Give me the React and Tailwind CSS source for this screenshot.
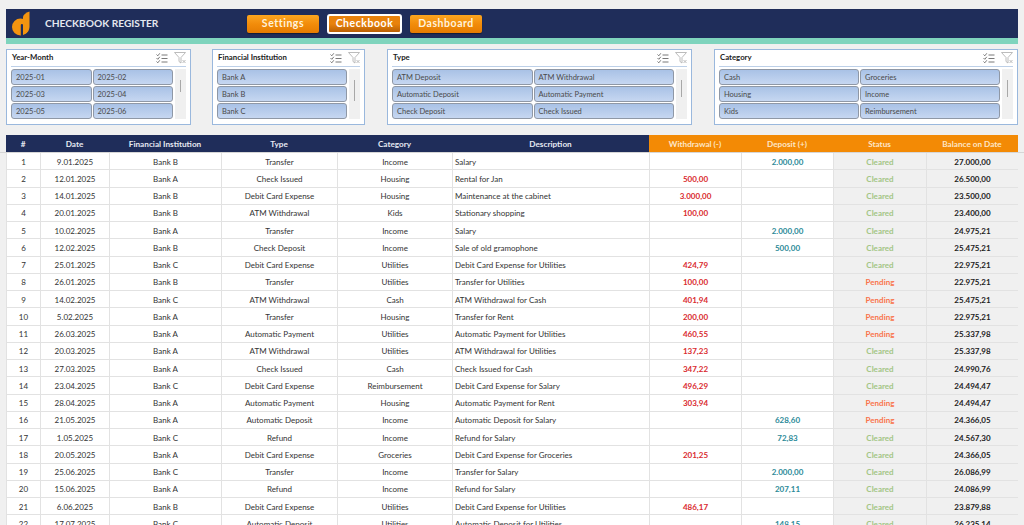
const rows = [
  ["1", "9.01.2025", "Bank B", "Transfer", "Income", "Salary", "", "2.000,00", "Cleared", "27.000,00"],
  ["2", "12.01.2025", "Bank A", "Check Issued", "Housing", "Rental for Jan", "500,00", "", "Cleared", "26.500,00"],
  ["3", "14.01.2025", "Bank B", "Debit Card Expense", "Housing", "Maintenance at the cabinet", "3.000,00", "", "Cleared", "23.500,00"],
  ["4", "20.01.2025", "Bank B", "ATM Withdrawal", "Kids", "Stationary shopping", "100,00", "", "Cleared", "23.400,00"],
  ["5", "10.02.2025", "Bank A", "Transfer", "Income", "Salary", "", "2.000,00", "Cleared", "24.975,21"],
  ["6", "12.02.2025", "Bank B", "Check Deposit", "Income", "Sale of old gramophone", "", "500,00", "Cleared", "25.475,21"],
  ["7", "25.01.2025", "Bank C", "Debit Card Expense", "Utilities", "Debit Card Expense for Utilities", "424,79", "", "Cleared", "22.975,21"],
  ["8", "26.01.2025", "Bank B", "Transfer", "Utilities", "Transfer for Utilities", "100,00", "", "Pending", "22.975,21"],
  ["9", "14.02.2025", "Bank C", "ATM Withdrawal", "Cash", "ATM Withdrawal for Cash", "401,94", "", "Pending", "25.475,21"],
  ["10", "5.02.2025", "Bank A", "Transfer", "Housing", "Transfer for Rent", "200,00", "", "Pending", "22.975,21"],
  ["11", "26.03.2025", "Bank A", "Automatic Payment", "Utilities", "Automatic Payment for Utilities", "460,55", "", "Pending", "25.337,98"],
  ["12", "20.03.2025", "Bank A", "ATM Withdrawal", "Utilities", "ATM Withdrawal for Utilities", "137,23", "", "Cleared", "25.337,98"],
  ["13", "27.03.2025", "Bank A", "Check Issued", "Cash", "Check Issued for Cash", "347,22", "", "Cleared", "24.990,76"],
  ["14", "23.04.2025", "Bank C", "Debit Card Expense", "Reimbursement", "Debit Card Expense for Salary", "496,29", "", "Cleared", "24.494,47"],
  ["15", "28.04.2025", "Bank A", "Automatic Payment", "Housing", "Automatic Payment for Rent", "303,94", "", "Pending", "24.494,47"],
  ["16", "21.05.2025", "Bank A", "Automatic Deposit", "Income", "Automatic Deposit for Salary", "", "628,60", "Pending", "24.366,05"],
  ["17", "1.05.2025", "Bank C", "Refund", "Income", "Refund for Salary", "", "72,83", "Cleared", "24.567,30"],
  ["18", "20.05.2025", "Bank A", "Debit Card Expense", "Groceries", "Debit Card Expense for Groceries", "201,25", "", "Cleared", "24.366,05"],
  ["19", "25.06.2025", "Bank C", "Transfer", "Income", "Transfer for Salary", "", "2.000,00", "Cleared", "26.086,99"],
  ["20", "15.06.2025", "Bank A", "Refund", "Income", "Refund for Salary", "", "207,11", "Cleared", "24.086,99"],
  ["21", "6.06.2025", "Bank B", "Debit Card Expense", "Utilities", "Debit Card Expense for Utilities", "486,17", "", "Cleared", "23.879,88"],
  ["22", "17.07.2025", "Bank C", "Automatic Deposit", "Utilities", "Automatic Deposit for Utilities", "", "148,15", "Cleared", "26.235,14"],
];

const columns = "grid grid-cols-[34px_69px_112px_116px_115px_197px_92px_92px_93px_92px]";

function Logo() {
  return (
    <svg width="20" height="25" viewBox="0 0 20 25" className="shrink-0">
      <circle cx="9.5" cy="16" r="8.5" fill="#f3940f" />
      <path d="M12 6 Q12.5 2.5 18.5 0.5 L18.5 16 A8.5 8.5 0 0 1 14 23 L12 23 Z" fill="#f3940f" />
      <rect x="9.8" y="13" width="2.2" height="12" rx="1" fill="#1f2d5a" />
    </svg>
  );
}

function SelectIcon() {
  return (
    <svg width="12" height="11" viewBox="0 0 12 11" fill="none" stroke="#6a6a6a" strokeWidth="0.9">
      <path d="M0.5 1.5 L1.8 2.8 L3.8 0.3" />
      <path d="M0.5 5 L1.8 6.3 L3.8 3.8" />
      <path d="M0.5 8.5 L1.8 9.8 L3.8 7.3" />
      <path d="M5.5 2 H11.5 M5.5 5.5 H11.5 M5.5 9 H11.5" />
    </svg>
  );
}

function ClearFilterIcon() {
  return (
    <svg width="12" height="12" viewBox="0 0 12 12" fill="none" stroke="#b4b4b4" strokeWidth="0.9">
      <path d="M0.5 0.5 H11.5 L7 5.5 V11 L5 9.5 V5.5 Z" />
      <path d="M8.5 8 L11.5 11 M11.5 8 L8.5 11" />
    </svg>
  );
}

function NavButton({ label, active }) {
  if (active) {
    return (
      <button className="w-[75px] h-[20px] rounded-[3px] border-2 border-white bg-gradient-to-b from-[#e8820c] via-[#e8820c] to-[#b85f05] text-[10.5px] font-bold tracking-[0.55px] text-white">
        {label}
      </button>
    );
  }
  return (
    <button className="w-[72px] h-[18px] rounded-[2px] bg-gradient-to-b from-[#fba61f] via-[#f28c0a] to-[#e57c02] text-[10.5px] font-bold tracking-[0.55px] text-[#fff3dc] shadow-[0_1px_1px_rgba(0,0,0,0.4)]">
      {label}
    </button>
  );
}

function Slicer({ title, width, items, cols, thumb }) {
  return (
    <div className={`${width} h-[76px] shrink-0 border border-[#9ab8dd] bg-white px-[4px]`}>
      <div className="flex h-[16px] items-center justify-between pl-[1px]">
        <span className="text-[7.8px] font-bold text-[#222]">{title}</span>
        <div className="flex items-center gap-[6px]">
          <SelectIcon />
          <ClearFilterIcon />
        </div>
      </div>
      <div className="h-[1px] bg-[#bdd0e8]" />
      <div className="mt-[2px] flex gap-[2px]">
        <div className={`grid flex-1 gap-x-[1px] gap-y-[1px] ${cols}`}>
          {items.map((item) => (
            <div
              key={item}
              className="flex h-[16px] items-center truncate rounded-[3px] border border-[#8f98a6] bg-gradient-to-b from-[#a9c2e6] to-[#c6d7f1] pl-[4px] pt-[1px] text-[7.5px] text-[#4a4a4a]"
            >
              {item}
            </div>
          ))}
        </div>
        <div className="flex h-[50px] w-[11px] shrink-0 justify-center bg-[#f0f0f0]">
          <div className={`mt-[11px] w-[1px] bg-[#a8a8a8] ${thumb}`} />
        </div>
      </div>
    </div>
  );
}

function HeaderCell({ label, orange }) {
  return (
    <div
      className={`flex items-center justify-center pt-[1px] text-[8.2px] font-bold ${
        orange ? "bg-[#f38a05] text-[#fde6c8]" : "bg-[#1f2d5a] text-[#e6e9f2]"
      }`}
    >
      {label}
    </div>
  );
}

function Row({ row }) {
  const cell = "flex items-center justify-center border-l border-b border-[#e2e2e2] pt-[1px]";
  return (
    <div className={`${columns} h-[17.25px] text-[8px] text-[#333]`}>
      <div className={cell}>{row[0]}</div>
      <div className={cell}>{row[1]}</div>
      <div className={cell}>{row[2]}</div>
      <div className={cell}>{row[3]}</div>
      <div className={cell}>{row[4]}</div>
      <div className="flex items-center border-l border-b border-[#e2e2e2] pl-[2px] pt-[1px]">{row[5]}</div>
      <div className={`${cell} font-bold text-[#d92a2e]`}>{row[6]}</div>
      <div className={`${cell} font-bold text-[#2b8a98]`}>{row[7]}</div>
      <div className={`${cell} bg-[#f0f0f0] font-bold ${row[8] === "Pending" ? "text-[#f9744c]" : "text-[#a3c585]"}`}>
        {row[8]}
      </div>
      <div className={`${cell} bg-[#f0f0f0] font-bold text-[#222]`}>{row[9]}</div>
    </div>
  );
}

export default function App() {
  return (
    <div className="h-[525px] overflow-hidden bg-[#f0f0f0] px-[6px] pt-[9px] font-['Lato','Liberation_Sans',sans-serif]">
      {/* Top banner */}
      <div className="flex h-[29px] items-center bg-[#1f2d5a] pl-[5px]">
        <Logo />
        <span className="ml-[14px] w-[202px] shrink-0 text-[10.2px] font-bold text-[#e4e7ef]">
          CHECKBOOK REGISTER
        </span>
        <div className="flex items-center gap-[8px]">
          <NavButton label="Settings" />
          <NavButton label="Checkbook" active />
          <NavButton label="Dashboard" />
        </div>
      </div>
      <div className="h-[6px] bg-[#7fd4bd]" />

      {/* Slicers */}
      <div className="mt-[5px] flex">
        <Slicer
          title="Year-Month"
          width="w-[185px]"
          cols="grid-cols-2"
          thumb="h-[12px]"
          items={["2025-01", "2025-02", "2025-03", "2025-04", "2025-05", "2025-06"]}
        />
        <div className="w-[21px] shrink-0" />
        <Slicer
          title="Financial Institution"
          width="w-[153px]"
          cols="grid-cols-1"
          thumb="h-[21px]"
          items={["Bank A", "Bank B", "Bank C"]}
        />
        <div className="w-[22px] shrink-0" />
        <Slicer
          title="Type"
          width="w-[305px]"
          cols="grid-cols-2"
          thumb="h-[17px]"
          items={["ATM Deposit", "ATM Withdrawal", "Automatic Deposit", "Automatic Payment", "Check Deposit", "Check Issued"]}
        />
        <div className="w-[22px] shrink-0" />
        <Slicer
          title="Category"
          width="w-[304px]"
          cols="grid-cols-2"
          thumb="h-[17px]"
          items={["Cash", "Groceries", "Housing", "Income", "Kids", "Reimbursement"]}
        />
      </div>

      {/* Register table */}
      <div className="mt-[10px]">
        <div className="-mx-[6px] border-b border-[#d6d6d6] px-[6px]">
          <div className={`${columns} h-[17px]`}>
            <HeaderCell label="#" />
            <HeaderCell label="Date" />
            <HeaderCell label="Financial Institution" />
            <HeaderCell label="Type" />
            <HeaderCell label="Category" />
            <HeaderCell label="Description" />
            <HeaderCell label="Withdrawal (-)" orange />
            <HeaderCell label="Deposit (+)" orange />
            <HeaderCell label="Status" orange />
            <HeaderCell label="Balance on Date" orange />
          </div>
        </div>
        <div className="bg-white">
          {rows.map((row) => (
            <Row key={row[0]} row={row} />
          ))}
        </div>
      </div>
    </div>
  );
}
